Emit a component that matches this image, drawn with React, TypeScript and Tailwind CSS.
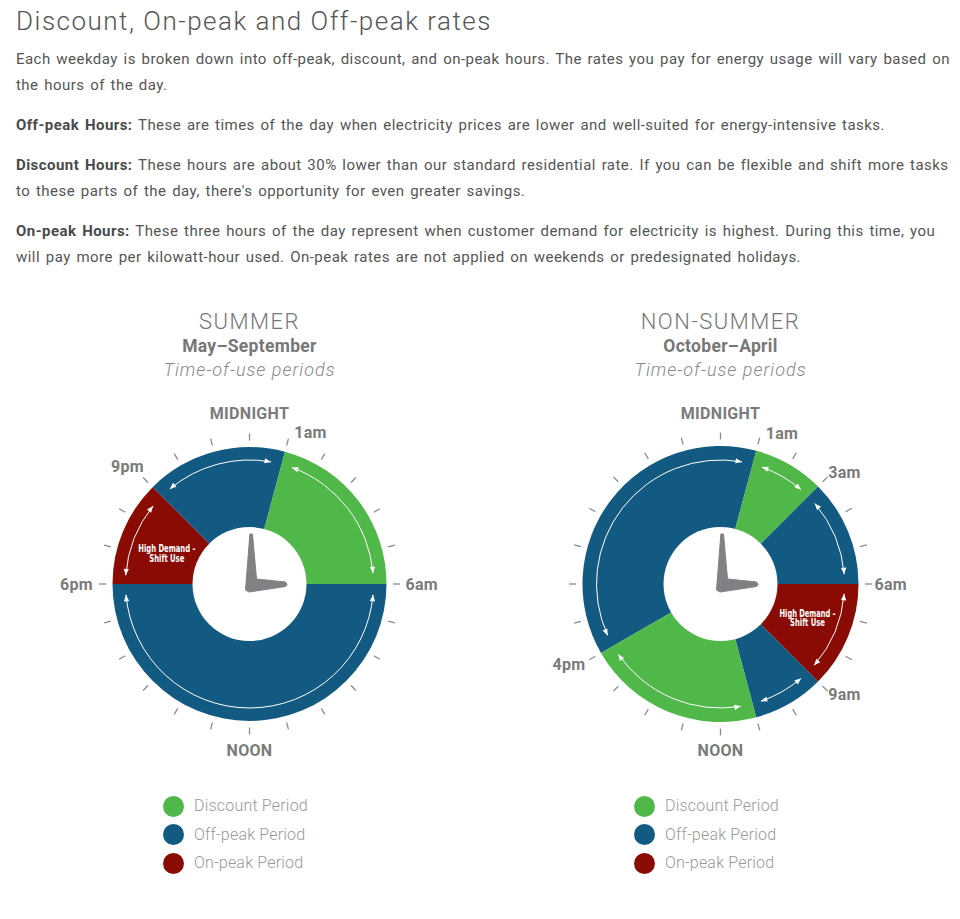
import React from "react";

const GREEN = "#50b848";
const BLUE = "#135a83";
const RED = "#8a0b04";
const TICK = "#8a8a8a";
const LABEL = "#7b7b7b";

type Seg = { from: number; to: number; color: string };
type Arr = { from: number; to: number };
type Lbl = { t: string; x: number; y: number; a?: "start" | "middle" | "end" };
type HD = { x: number; y1: number; y2: number; w1: number; w2: number };

const CX = 235.5;
const CY = 203;

function pt(r: number, deg: number, cx = CX, cy = CY): [number, number] {
  const rad = (deg * Math.PI) / 180;
  return [cx + r * Math.sin(rad), cy - r * Math.cos(rad)];
}

function wedge(r: number, a1: number, a2: number) {
  const [x1, y1] = pt(r, a1);
  const [x2, y2] = pt(r, a2);
  const large = a2 - a1 > 180 ? 1 : 0;
  return `M ${CX} ${CY} L ${x1} ${y1} A ${r} ${r} 0 ${large} 1 ${x2} ${y2} Z`;
}

function arcPath(r: number, a1: number, a2: number) {
  const [x1, y1] = pt(r, a1);
  const [x2, y2] = pt(r, a2);
  const large = a2 - a1 > 180 ? 1 : 0;
  return `M ${x1} ${y1} A ${r} ${r} 0 ${large} 1 ${x2} ${y2}`;
}

function head(r: number, deg: number, dir: 1 | -1) {
  const [tx, ty] = pt(r, deg);
  const rad = (deg * Math.PI) / 180;
  const tanx = Math.cos(rad) * dir;
  const tany = Math.sin(rad) * dir;
  const nx = -tany;
  const ny = tanx;
  const L = 6.5;
  const W = 2.6;
  const bx = tx - tanx * L;
  const by = ty - tany * L;
  return `${tx},${ty} ${bx + nx * W},${by + ny * W} ${bx - nx * W},${by - ny * W}`;
}

function Clock({
  r,
  segs,
  arrows,
  labels,
  hd,
}: {
  r: number;
  segs: Seg[];
  arrows: Arr[];
  labels: Lbl[];
  hd: HD;
}) {
  const ticks = Array.from({ length: 24 }, (_, i) => i * 15);
  const AR = 124;
  return (
    <svg width="471" height="388" viewBox="0 0 471 388" className="block">
      {segs.map((s, i) => (
        <path key={i} d={wedge(r, s.from, s.to)} fill={s.color} />
      ))}
      <circle cx={CX} cy={CY} r={57} fill="#ffffff" />
      {arrows.map((a, i) => (
        <g key={i}>
          <path d={arcPath(AR, a.from, a.to)} fill="none" stroke="#ffffff" strokeWidth={1} />
          <polygon points={head(AR, a.from, -1)} fill="#ffffff" />
          <polygon points={head(AR, a.to, 1)} fill="#ffffff" />
        </g>
      ))}
      {ticks.map((d) => {
        const [x1, y1] = pt(r + 6.5, d);
        const [x2, y2] = pt(r + 13.5, d);
        return <line key={d} x1={x1} y1={y1} x2={x2} y2={y2} stroke={TICK} strokeWidth={1.3} />;
      })}
      <polygon
        points={`${CX + 0.4},${CY - 50} ${CX + 3},${CY - 50} ${CX + 7},${CY - 5} ${CX + 36},${CY - 2} ${CX + 37.5},${CY + 0.5} ${CX + 36},${CY + 2.5} ${CX - 0.5},${CY + 8} ${CX - 4},${CY + 6}`}
        fill="#818185"
        stroke="#818185"
        strokeWidth={1}
        strokeLinejoin="round"
      />
      {labels.map((l, i) => (
        <text
          key={i}
          x={CX + l.x}
          y={CY + l.y + 5.6}
          textAnchor={l.a ?? "middle"}
          fill={LABEL}
          fontFamily="Roboto, sans-serif"
          fontWeight={700}
          fontSize={16}
          letterSpacing={0.3}
        >
          {l.t}
        </text>
      ))}
      <text
        x={CX + hd.x}
        y={CY + hd.y1}
        textAnchor="middle"
        fill="#ffffff"
        fontFamily="'DejaVu Sans Condensed', 'DejaVu Sans', sans-serif"
        fontWeight={700}
        fontSize={10}
        textLength={hd.w1}
        lengthAdjust="spacingAndGlyphs"
      >
        High Demand -
      </text>
      <text
        x={CX + hd.x}
        y={CY + hd.y2}
        textAnchor="middle"
        fill="#ffffff"
        fontFamily="'DejaVu Sans Condensed', 'DejaVu Sans', sans-serif"
        fontWeight={700}
        fontSize={10}
        textLength={hd.w2}
        lengthAdjust="spacingAndGlyphs"
      >
        Shift Use
      </text>
    </svg>
  );
}

function Legend() {
  const items = [
    { c: GREEN, t: "Discount Period" },
    { c: BLUE, t: "Off-peak Period" },
    { c: RED, t: "On-peak Period" },
  ];
  return (
    <div className="pl-[149px] mt-[23px] flex flex-col">
      {items.map((it) => (
        <div key={it.t} className="flex items-center gap-[10px] h-[28.5px]">
          <span className="w-[21px] h-[21px] rounded-full shrink-0" style={{ backgroundColor: it.c }} />
          <span className="text-[16px] font-light text-[#999999] tracking-[0.2px] font-['Roboto',sans-serif]">
            {it.t}
          </span>
        </div>
      ))}
    </div>
  );
}

function ChartColumn({
  title,
  months,
  children,
}: {
  title: string;
  months: string;
  children: React.ReactNode;
}) {
  return (
    <div className="flex flex-col">
      <div className="flex flex-col items-center text-[#777777] font-['Roboto',sans-serif]">
        <div className="text-[22px] leading-[26px] font-light tracking-[1.5px]">{title}</div>
        <div className="text-[17.5px] leading-[23px] font-bold tracking-[0.3px]">{months}</div>
        <div className="text-[18px] leading-[23px] font-light italic tracking-[1px] text-[#888888]">
          Time-of-use periods
        </div>
      </div>
      {children}
      <Legend />
    </div>
  );
}

export default function App() {
  const summerSegs: Seg[] = [
    { from: 315, to: 375, color: BLUE },
    { from: 15, to: 90, color: GREEN },
    { from: 90, to: 270, color: BLUE },
    { from: 270, to: 315, color: RED },
  ];
  const summerArrows: Arr[] = [
    { from: 320, to: 370 },
    { from: 20, to: 85 },
    { from: 95, to: 265 },
    { from: 274, to: 309 },
  ];
  const summerLabels: Lbl[] = [
    { t: "MIDNIGHT", x: 0, y: -171 },
    { t: "1am", x: 61, y: -152 },
    { t: "9pm", x: -122, y: -117.5 },
    { t: "6pm", x: -156.5, y: 0.5, a: "end" },
    { t: "6am", x: 156, y: 0.5, a: "start" },
    { t: "NOON", x: 0, y: 166 },
  ];
  const nsSegs: Seg[] = [
    { from: 240, to: 375, color: BLUE },
    { from: 15, to: 45, color: GREEN },
    { from: 45, to: 90, color: BLUE },
    { from: 90, to: 135, color: RED },
    { from: 135, to: 165, color: BLUE },
    { from: 165, to: 240, color: GREEN },
  ];
  const nsArrows: Arr[] = [
    { from: 245.5, to: 370 },
    { from: 19.5, to: 40.5 },
    { from: 49.5, to: 85.5 },
    { from: 94.5, to: 131 },
    { from: 139.5, to: 161 },
    { from: 170.5, to: 235.5 },
  ];
  const nsLabels: Lbl[] = [
    { t: "MIDNIGHT", x: 0, y: -171 },
    { t: "1am", x: 61.5, y: -151 },
    { t: "3am", x: 124, y: -111.5 },
    { t: "6am", x: 154, y: 0.5, a: "start" },
    { t: "9am", x: 124, y: 110 },
    { t: "4pm", x: -151.5, y: 80.5 },
    { t: "NOON", x: 0, y: 166 },
  ];

  const para = "text-[15px] leading-[26px] tracking-[0.45px] [word-spacing:1.6px]";

  return (
    <div className="w-[960px] min-h-[919px] bg-white font-['Roboto',sans-serif] text-[#555555]">
      <div className="pl-4 pr-[5px] pt-[6px]">
        <h1 className="text-[26px] leading-[30px] font-light tracking-[1.5px] text-[#555555] mb-[10px]">
          Discount, On-peak and Off-peak rates
        </h1>
        <p className={`${para} mb-[14px]`}>
          Each weekday is broken down into off-peak, discount, and on-peak hours. The rates you pay for energy usage
          will vary based on the hours of the day.
        </p>
        <p className={`${para} mb-[14px]`}>
          <b className="font-bold text-[#4a4a4a]">Off-peak Hours:</b> These are times of the day when electricity
          prices are lower and well-suited for energy-intensive tasks.
        </p>
        <p className={`${para} mb-[14px]`}>
          <b className="font-bold text-[#4a4a4a]">Discount Hours:</b> These hours are about 30% lower than our
          standard residential rate. If you can be flexible and shift more tasks to these parts of the day, there's
          opportunity for even greater savings.
        </p>
        <p className={para}>
          <b className="font-bold text-[#4a4a4a]">On-peak Hours:</b> These three hours of the day represent when
          customer demand for electricity is highest. During this time, you will pay more per kilowatt-hour used.
          On-peak rates are not applied on weekends or predesignated holidays.
        </p>
      </div>
      <div className="grid grid-cols-[471px_471px] ml-[14px] mt-[39px]">
        <ChartColumn title="SUMMER" months="May–September">
          <Clock
            r={137}
            segs={summerSegs}
            arrows={summerArrows}
            labels={summerLabels}
            hd={{ x: -82.7, y1: -31.7, y2: -22, w1: 57, w2: 35 }}
          />
        </ChartColumn>
        <ChartColumn title="NON-SUMMER" months="October–April">
          <Clock
            r={138}
            segs={nsSegs}
            arrows={nsArrows}
            labels={nsLabels}
            hd={{ x: 87, y1: 32.5, y2: 41.5, w1: 56, w2: 35 }}
          />
        </ChartColumn>
      </div>
    </div>
  );
}
